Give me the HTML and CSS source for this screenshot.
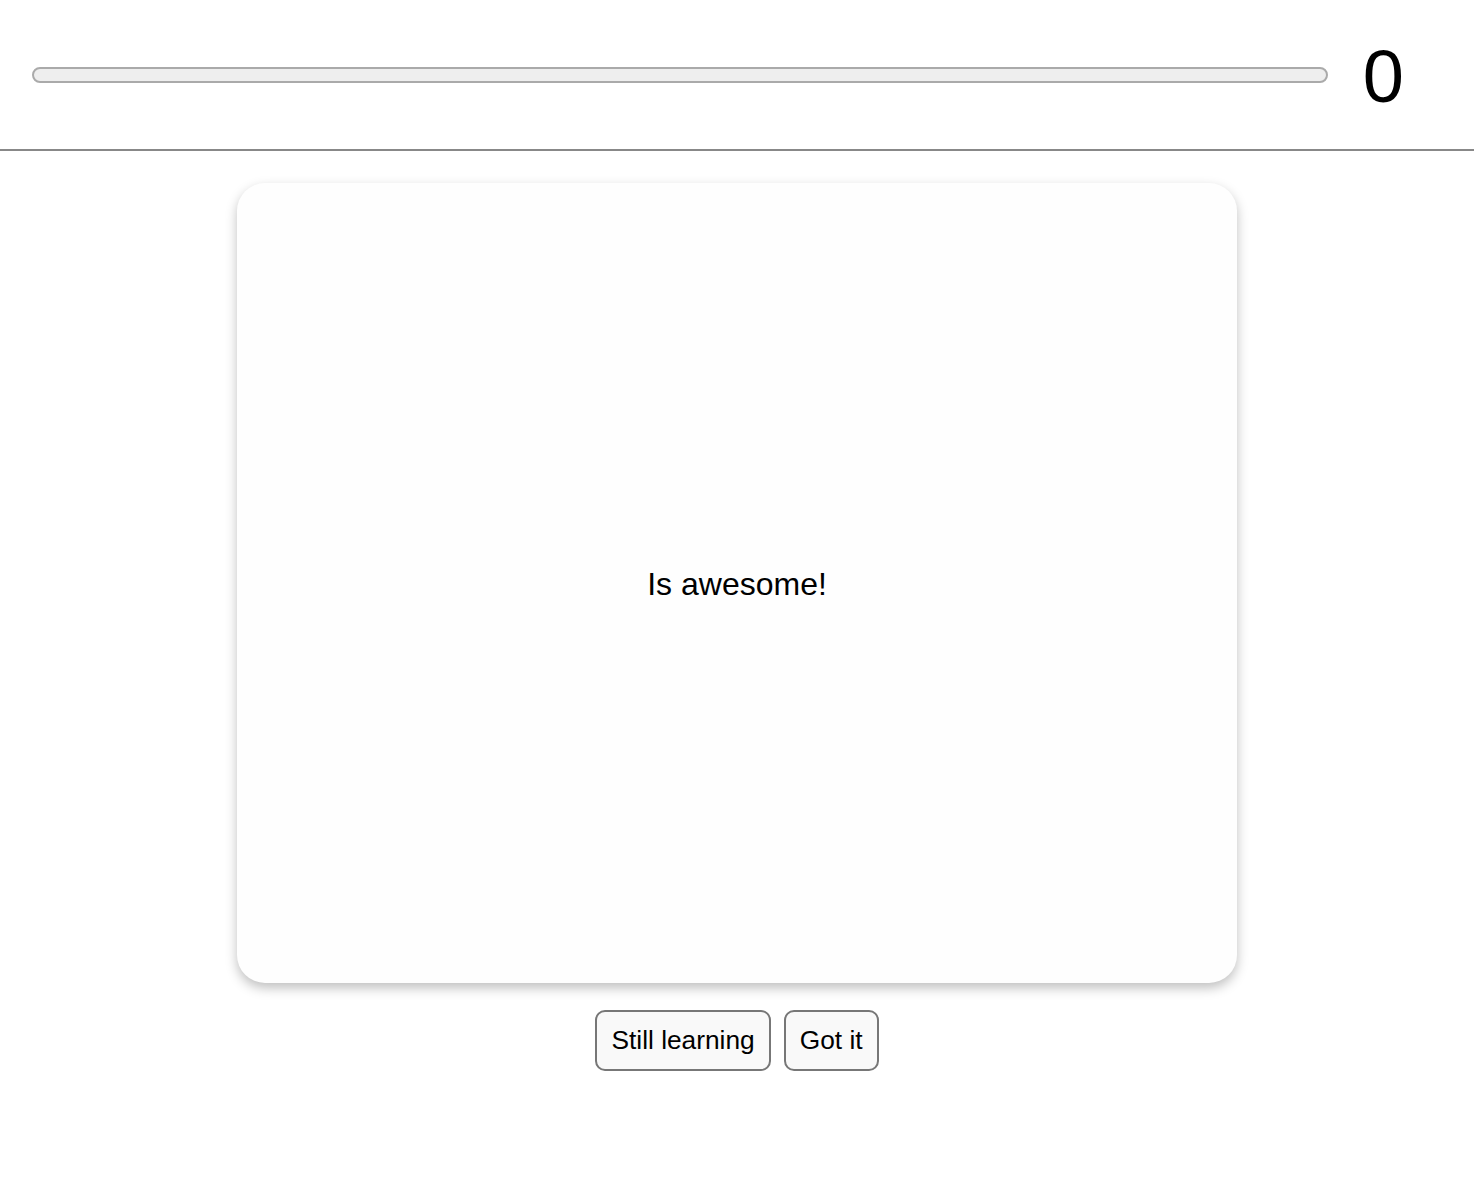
FILE: index.html
```html
<!DOCTYPE html>
<html>
<head>
<meta charset="utf-8">
<link rel="stylesheet" href="styles.css">
</head>
<body>
<header class="top">
  <div class="progress"></div>
  <div class="score">0</div>
</header>
<main class="main">
  <div class="card"><span class="card-text">Is awesome!</span></div>
  <div class="actions">
    <button class="btn">Still learning</button>
    <button class="btn">Got it</button>
  </div>
</main>
</body>
</html>
```
FILE: styles.css
```css
html, body { margin: 0; padding: 0; background: #fff; }
body { font-family: "Liberation Sans", Arial, sans-serif; color: #000; }
.top {
  height: 151px;
  box-sizing: border-box;
  border-bottom: 2px solid #888;
  display: flex;
  align-items: center;
  padding: 0 70px 0 32px;
  gap: 35px;
}
.progress {
  flex: 1;
  height: 16px;
  box-sizing: border-box;
  border: 2px solid #aaa;
  background: #eee;
  border-radius: 8px;
}
.score { font-size: 74px; line-height: 1; padding-top: 4px; }
.main {
  display: flex;
  flex-direction: column;
  align-items: center;
  padding-top: 32px;
}
.card {
  width: 1000px;
  height: 800px;
  border-radius: 28px;
  background: #fefefe;
  box-shadow: 0 5px 12px rgba(0,0,0,0.25);
  display: flex;
  align-items: center;
  justify-content: center;
}
.card-text { font-size: 32px; padding-top: 2px; }
.actions { display: flex; gap: 13px; margin-top: 27px; }
.btn {
  font-family: "Liberation Sans", Arial, sans-serif;
  font-size: 26.3px;
  line-height: 31px;
  padding: 13px 14px;
  border: 2px solid #777;
  border-radius: 10px;
  background: #f9f9f9;
  color: #000;
}
```
